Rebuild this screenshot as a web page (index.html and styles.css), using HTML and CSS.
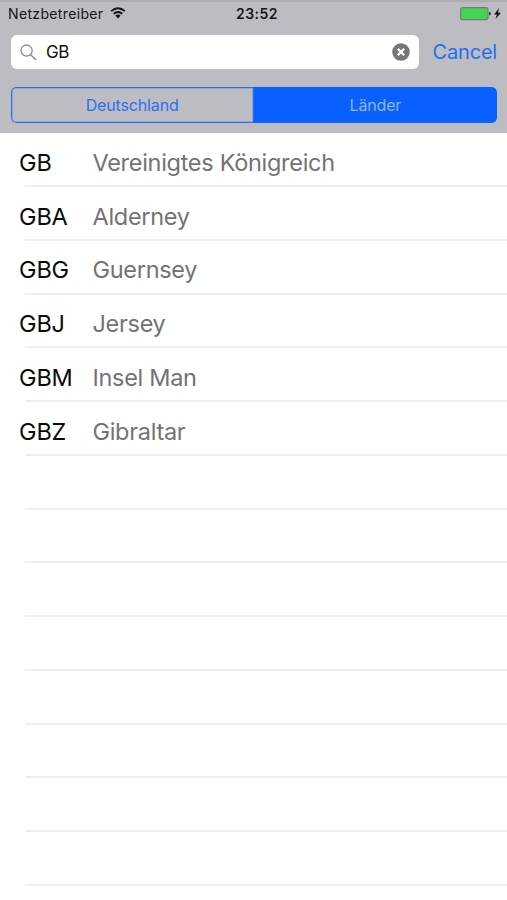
FILE: index.html
```
<!DOCTYPE html>
<html lang="de">
<head>
<meta charset="utf-8">
<meta name="viewport" content="width=device-width">
<title>Länder</title>
<link rel="stylesheet" href="styles.css">
</head>
<body>
<header class="header">
  <div class="status">
    <div class="carrier"><span class="carrier-name">Netzbetreiber</span>
      <svg class="wifi" viewBox="0 0 16 12"><path d="M1.2 4.2Q8-1.8 14.8 4.2M3.7 6.8Q8 3.1 12.3 6.8" fill="none" stroke="#111" stroke-width="1.8"/><path d="M5.4 8.6Q8 6.4 10.6 8.6L8 11.4Z" fill="#111"/></svg>
    </div>
    <span class="clock">23:52</span>
    <svg class="battery" viewBox="0 0 42 14"><rect x=".6" y=".6" width="27.4" height="12" rx="2" fill="#43d551" stroke="#777b79" stroke-width="1.1"/><path d="M29 4.7Q31 5 31 6.6T29 8.5Z" fill="#333"/><path d="M39 1L34.2 7.4H37L35.4 12L41 5.7H38Z" fill="#111"/></svg>
  </div>
  <div class="search-row">
    <div class="search">
      <svg class="lens" viewBox="0 0 17 17"><circle cx="6.6" cy="6.6" r="5.6"/><path d="M10.7 10.7L16 16"/></svg>
      <span class="query">GB</span>
      <svg class="clear" viewBox="0 0 18 18"><circle cx="9" cy="9" r="8.8" fill="#77777b"/><path d="M5.8 5.8L12.2 12.2M12.2 5.8L5.8 12.2" stroke="#fff" stroke-width="2.1"/></svg>
    </div>
    <span class="cancel">Cancel</span>
  </div>
  <div class="segments">
    <div class="segment"><span>Deutschland</span></div>
    <div class="segment selected"><span>Länder</span></div>
  </div>
</header>
<main class="list">
  <div class="row"><span class="code">GB</span><span class="name">Vereinigtes Königreich</span></div>
  <div class="row"><span class="code">GBA</span><span class="name">Alderney</span></div>
  <div class="row"><span class="code">GBG</span><span class="name">Guernsey</span></div>
  <div class="row"><span class="code">GBJ</span><span class="name">Jersey</span></div>
  <div class="row"><span class="code">GBM</span><span class="name">Insel Man</span></div>
  <div class="row"><span class="code">GBZ</span><span class="name">Gibraltar</span></div>
  <div class="row"></div>
  <div class="row"></div>
  <div class="row"></div>
  <div class="row"></div>
  <div class="row"></div>
  <div class="row"></div>
  <div class="row"></div>
  <div class="row"></div>
</main>
</body>
</html>
```
FILE: styles.css
```
* { box-sizing: border-box; }
body { margin: 0; height: 900px; overflow: hidden; background: #fff; font-family: Inter, "Liberation Sans", sans-serif; }
svg { display: block; flex: none; }
.header { height: 133px; background: #bdbcc2; border-top: 2px solid #adacb1; }
.status { height: 23px; display: grid; grid-template-columns: 1fr auto 1fr; align-items: center; padding: 0 5px 0 8px; color: #151517; }
.carrier { display: flex; align-items: center; gap: 7px; }
.carrier-name { font-size: 14px; letter-spacing: .35px; }
.wifi { width: 16px; height: 12px; margin-top: -2px; }
.clock { font-size: 14px; font-weight: 600; letter-spacing: .5px; margin-left: 4px; }
.battery { width: 42px; height: 14px; justify-self: end; margin-top: 1px; }
.search-row { display: flex; height: 34px; margin: 10px 10px 0 11px; align-items: center; }
.search { width: 408px; height: 34px; background: #fff; border-radius: 6px; display: flex; align-items: center; padding: 0 9px; }
.lens { width: 17px; height: 17px; fill: none; stroke: #88888c; stroke-width: 1.3; }
.query { font-size: 17px; margin-left: 9px; letter-spacing: -.4px; color: #111; }
.clear { width: 18px; height: 18px; margin-left: auto; }
.cancel { margin-left: 14px; font-size: 20px; letter-spacing: -.2px; color: #1d70f2; }
.segments { display: flex; height: 36px; margin: 18px 10px 0 10.5px; border-radius: 5px; overflow: hidden; }
.segment { flex: 1; display: flex; align-items: center; justify-content: center; font-size: 16px; letter-spacing: -.15px; color: #2873ed; border-radius: 5px 0 0 5px; box-shadow: inset 0 0 0 1.3px #2470ee; }
.selected { background: #0860ff; color: #8eb4f0; border-radius: 0 5px 5px 0; box-shadow: none; }
.list { display: flex; flex-direction: column; }
.row { height: 53.75px; flex: none; display: flex; align-items: center; padding: 4px 0 0 19px; background: linear-gradient(#efeff0, #efeff0) 25px 100% / 100% 2px no-repeat; }
.list .row:first-child { height: 54.2px; }
.code { width: 73.5px; font-size: 23.5px; letter-spacing: -.15px; color: #0b0b0b; }
.name { font-size: 23.5px; letter-spacing: -.3px; color: #737373; white-space: nowrap; }
```
